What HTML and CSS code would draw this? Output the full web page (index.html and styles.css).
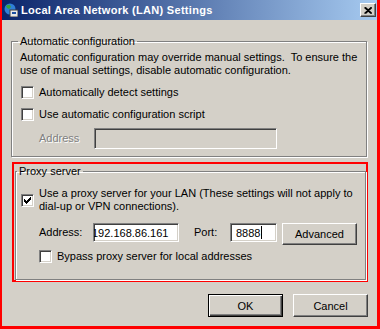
FILE: index.html
```html
<html>
<head>
	<title>Local Area Network (LAN) Settings</title>
	<meta http-equiv="Content-Type" content="text/html; charset=UTF-8">
	<link rel="stylesheet" href="styles.css">
</head>
<body>
	<div class="window">
		<div class="titlebar">
			<svg class="title-icon" width="14" height="14" viewBox="0 0 14 14">
				<circle cx="6" cy="6" r="5.5" fill="#2f7fd6"/>
				<path d="M2 3 Q4 1 6 2 L7 4 L5 6 L3 5 Z" fill="#3aa13a"/>
				<path d="M6 8 L9 7 L10 9 L7 11 Z" fill="#3aa13a"/>
				<rect x="6" y="7" width="8" height="7" fill="#e8e8e8" stroke="#404040" stroke-width="1"/>
				<rect x="8" y="9" width="4" height="2" fill="#1c4fa0"/>
			</svg>
			<span class="title-text">Local Area Network (LAN) Settings</span>
			<div class="close-button">
				<svg width="8" height="7" viewBox="0 0 8 7">
					<path d="M0.5 0.5 L7 6.5 M1.5 0.5 L8 6.5 M7 0.5 L0.5 6.5 M8 0.5 L1.5 6.5" stroke="#000" stroke-width="1.2" fill="none"/>
				</svg>
			</div>
		</div>

		<div class="dialog-body">
			<fieldset class="group group-auto">
				<legend>Automatic configuration</legend>
				<p class="note">Automatic configuration may override manual settings.&nbsp; To ensure the<br>use of manual settings, disable automatic configuration.</p>
				<div class="check-row"><span class="checkbox"></span><span>Automatically detect settings</span></div>
				<div class="check-row"><span class="checkbox"></span><span>Use automatic configuration script</span></div>
				<div class="field-row script-row">
					<span class="field-label disabled-label">Address</span>
					<span class="textbox disabled-box script-box"></span>
				</div>
			</fieldset>

			<div class="highlight">
				<fieldset class="group group-proxy">
					<legend>Proxy server</legend>
					<div class="check-row two-line">
						<span class="checkbox">
							<svg width="7" height="7" viewBox="0 0 7 7">
								<path d="M0 2h1v3h-1z M1 3h1v3h-1z M2 4h1v3h-1z M3 3h1v3h-1z M4 2h1v3h-1z M5 1h1v3h-1z M6 0h1v3h-1z" fill="#000"/>
							</svg>
						</span>
						<span>Use a proxy server for your LAN (These settings will not apply to<br>dial-up or VPN connections).</span>
					</div>
					<div class="field-row proxy-row">
						<span class="field-label address-label">Address:</span>
						<span class="textbox address-box"><span class="scrolled">192.168.86.161</span></span>
						<span class="field-label port-label">Port:</span>
						<span class="textbox port-box">8888<span class="caret"></span></span>
						<span class="button advanced-button">Advanced</span>
					</div>
					<div class="check-row bypass-row"><span class="checkbox"></span><span>Bypass proxy server for local addresses</span></div>
				</fieldset>
			</div>

			<div class="actions">
				<span class="button default-button">OK</span>
				<span class="button">Cancel</span>
			</div>
		</div>
	</div>
</body>
</html>
```

FILE: styles.css
```css
	body {
		margin: 0;
		padding: 0;
		background-color: #d4d0c8;
		font-family: "Liberation Sans", Arial, sans-serif;
		font-size: 11px;
		color: #000;
	}

	.window {
		width: 380px;
		height: 329px;
		box-sizing: border-box;
		border-left: 2px solid #f00;
		border-right: 3px solid #f00;
		border-bottom: 3px solid #f00;
		background-color: #d4d0c8;
		display: flex;
		flex-direction: column;
	}

	.titlebar {
		height: 20px;
		display: flex;
		align-items: center;
		padding-left: 2px;
		background: linear-gradient(to right, #0a246a, #a6caf0);
		color: #fff;
	}

	.title-icon {
		margin-right: 3px;
	}

	.title-text {
		flex: 1;
		font-weight: bold;
		font-size: 11px;
		letter-spacing: 0.3px;
	}

	.close-button {
		width: 16px;
		height: 14px;
		box-sizing: border-box;
		margin-right: 1px;
		display: flex;
		align-items: center;
		justify-content: center;
		background-color: #d4d0c8;
		border: 1px solid;
		border-color: #fff #404040 #404040 #fff;
		box-shadow: inset -1px -1px 0 #808080;
	}

	.dialog-body {
		flex: 1;
		display: flex;
		flex-direction: column;
		padding: 15px 10px 0 9px;
	}

	.group {
		margin: 0;
		border: 1px solid #808080;
		box-shadow: 1px 1px 0 #fff, inset 1px 1px 0 #fff;
		min-width: 0;
	}

	.group legend {
		padding: 0 2px;
		line-height: 13px;
	}

	.group-auto {
		padding: 3px 8px 7px 8px;
	}

	.group-auto legend {
		margin-left: -2px;
	}

	.note {
		margin: 0;
		line-height: 13px;
	}

	.check-row {
		display: flex;
		align-items: center;
		line-height: 13px;
		margin-top: 9px;
	}

	.group-auto .check-row {
		padding-left: 1px;
	}

	.checkbox {
		width: 13px;
		height: 13px;
		box-sizing: border-box;
		flex-shrink: 0;
		margin-right: 5px;
		display: flex;
		align-items: center;
		justify-content: center;
		background-color: #fff;
		border: 1px solid;
		border-color: #808080 #fff #fff #808080;
		box-shadow: inset 1px 1px 0 #404040, inset -1px -1px 0 #d4d0c8;
	}

	.field-row {
		display: flex;
		align-items: flex-start;
	}

	.field-label {
		line-height: 19px;
	}

	.disabled-label {
		color: #808080;
		text-shadow: 1px 1px 0 #fff;
	}

	.textbox {
		box-sizing: border-box;
		height: 19px;
		display: flex;
		align-items: center;
		padding-left: 3px;
		overflow: hidden;
		white-space: nowrap;
		background-color: #fff;
		border: 1px solid;
		border-color: #808080 #fff #fff #808080;
		box-shadow: inset 1px 1px 0 #404040, inset -1px -1px 0 #d4d0c8;
	}

	.disabled-box {
		background-color: #d4d0c8;
	}

	.script-row {
		margin-top: 7px;
		padding-left: 19px;
	}

	.script-row .field-label {
		width: 55px;
		line-height: 21px;
	}

	.script-box {
		width: 183px;
		height: 21px;
	}

	.highlight {
		margin: 5px -1px 0 1px;
		padding: 1px 0 0 1px;
		border: 2px solid #f00;
	}

	.group-proxy {
		padding: 0 0 16px 5px;
	}

	.group-proxy legend {
		margin-left: -4px;
	}

	.proxy-row {
		margin-top: 10px;
		padding-left: 18px;
	}

	.address-label {
		width: 54px;
	}

	.address-box {
		width: 86px;
	}

	.scrolled {
		margin-left: -5px;
	}

	.port-label {
		width: 36px;
		margin-left: 15px;
	}

	.port-box {
		width: 47px;
		padding-left: 5px;
	}

	.caret {
		width: 1px;
		height: 13px;
		background-color: #000;
		margin-left: 1px;
	}

	.button {
		width: 75px;
		height: 23px;
		box-sizing: border-box;
		display: flex;
		align-items: center;
		justify-content: center;
		background-color: #d4d0c8;
		border: 1px solid;
		border-color: #fff #404040 #404040 #fff;
		box-shadow: inset -1px -1px 0 #808080, inset 1px 1px 0 #d4d0c8;
		cursor: pointer;
		user-select: none;
	}

	.advanced-button {
		height: 22px;
		margin-left: 5px;
	}

	.bypass-row {
		margin-top: 5px;
		padding-left: 18px;
	}

	.actions {
		display: flex;
		justify-content: flex-end;
		gap: 10px;
		margin: 12px -1px 0 0;
	}

	.default-button {
		border: 1px solid #000;
		box-shadow: inset 1px 1px 0 #fff, inset -1px -1px 0 #404040, inset -2px -2px 0 #808080;
	}
```
